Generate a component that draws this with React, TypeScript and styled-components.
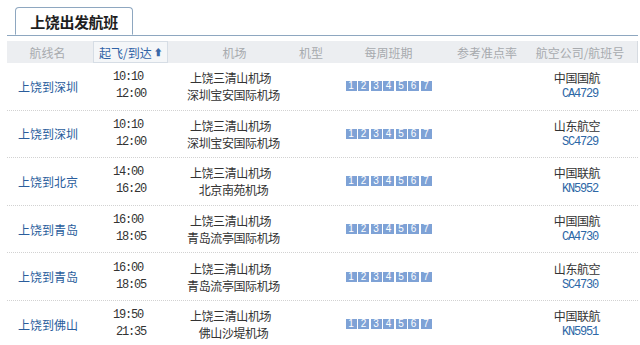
import styled, { createGlobalStyle } from 'styled-components'

const GlobalStyle = createGlobalStyle`
    body {
        margin: 0;
        background: #fff;
        font-family: "Noto Sans CJK SC", "Liberation Sans", sans-serif;
        font-size: 12px;
        color: #333;
    }
`

const COLS = '81px 84px 125px 28px 127px 70px 116px'

const Page = styled.div`
    width: 640px;
    height: 345px;
    overflow: hidden;
    padding: 7px 2px 0 7px;
    box-sizing: border-box;
`
const TabBar = styled.div`
    display: flex;
    border-bottom: 1px solid #8ea7c0;
    height: 28px;
    padding-left: 8px;
`
const Tab = styled.div`
    width: 118px;
    height: 28px;
    box-sizing: border-box;
    border: 1px solid #8ea7c0;
    border-bottom: 1px solid #fff;
    border-radius: 4px 4px 0 0;
    background: #fff;
    display: flex;
    align-items: center;
    justify-content: center;
    font-size: 15px;
    font-weight: 700;
    color: #1e1e1e;
    letter-spacing: -0.4px;
    margin-bottom: -1px;
`
const HeaderRow = styled.div`
    display: grid;
    grid-template-columns: ${COLS};
    height: 22px;
    margin-top: 5px;
    background: #eceef1;
    border-right: 1px solid #d6dbe1;
`
const HeadCell = styled.div<{ $active?: boolean }>`
    display: flex;
    align-items: center;
    justify-content: center;
    color: ${p => (p.$active ? '#2f62a6' : '#a7aaae')};
    font-size: 12px;
    ${p => p.$active && `
        background: #f4f6f8;
        border: 1px solid #d6dde5;
        margin: 0 4px 0 5px;
        justify-content: flex-start;
        padding-left: 5px;
    `}
`
const Arrow = styled.span`
    font-size: 9px;
    margin-left: 2px;
    color: #3a68a8;
`
const Row = styled.div`
    display: grid;
    grid-template-columns: ${COLS};
    height: 47.6px;
    box-sizing: border-box;
    border-bottom: 1px dotted #d2d2d2;
    align-items: center;
`
const RouteName = styled.div`
    color: #2a5d9c;
    padding-left: 11px;
    font-size: 12px;
`
const Stack = styled.div`
    display: flex;
    flex-direction: column;
    line-height: 17px;
`
const Time = styled.span<{ $indent: number }>`
    font-family: "Liberation Mono", monospace;
    font-size: 12px;
    letter-spacing: -1.2px;
    padding-left: ${p => p.$indent}px;
    color: #333;
`
const Airport = styled.span<{ $shift: number }>`
    text-align: center;
    font-size: 12px;
    letter-spacing: -0.4px;
    padding-right: ${p => p.$shift}px;
    color: #333;
`
const Days = styled.div`
    display: flex;
    gap: 1.5px;
    justify-content: center;
`
const Day = styled.span`
    width: 11px;
    height: 10px;
    background: #7ea2d6;
    color: #fff;
    font-family: "Liberation Sans", sans-serif;
    font-size: 10px;
    line-height: 10px;
    text-align: center;
`
const Airline = styled.span`
    text-align: center;
    font-size: 12px;
    letter-spacing: -0.4px;
    padding-right: 6px;
    color: #333;
`
const FlightNo = styled.span`
    text-align: center;
    font-family: "Liberation Mono", monospace;
    font-size: 12px;
    letter-spacing: -1.2px;
    color: #2d67a6;
`

interface Flight {
    route: string
    dep: string
    arr: string
    from: string
    to: string
    airline: string
    no: string
}

const flights: Flight[] = [
    { route: '上饶到深圳', dep: '10:10', arr: '12:00', from: '上饶三清山机场', to: '深圳宝安国际机场', airline: '中国国航', no: 'CA4729' },
    { route: '上饶到深圳', dep: '10:10', arr: '12:00', from: '上饶三清山机场', to: '深圳宝安国际机场', airline: '山东航空', no: 'SC4729' },
    { route: '上饶到北京', dep: '14:00', arr: '16:20', from: '上饶三清山机场', to: '北京南苑机场', airline: '中国联航', no: 'KN5952' },
    { route: '上饶到青岛', dep: '16:00', arr: '18:05', from: '上饶三清山机场', to: '青岛流亭国际机场', airline: '中国国航', no: 'CA4730' },
    { route: '上饶到青岛', dep: '16:00', arr: '18:05', from: '上饶三清山机场', to: '青岛流亭国际机场', airline: '山东航空', no: 'SC4730' },
    { route: '上饶到佛山', dep: '19:50', arr: '21:35', from: '上饶三清山机场', to: '佛山沙堤机场', airline: '中国联航', no: 'KN5951' },
]

const headers = ['航线名', '起飞/到达', '机场', '机型', '每周班期', '参考准点率', '航空公司/航班号']

export default function App() {
    return (
        <Page>
            <GlobalStyle />
            <TabBar>
                <Tab>上饶出发航班</Tab>
            </TabBar>
            <HeaderRow>
                {headers.map((h, i) => (
                    <HeadCell key={h} $active={i === 1}>
                        {h}
                        {i === 1 && <Arrow>⬆</Arrow>}
                    </HeadCell>
                ))}
            </HeaderRow>
            {flights.map((f, i) => (
                <Row key={i}>
                    <RouteName>{f.route}</RouteName>
                    <Stack>
                        <Time $indent={25}>{f.dep}</Time>
                        <Time $indent={28}>{f.arr}</Time>
                    </Stack>
                    <Stack>
                        <Airport $shift={8}>{f.from}</Airport>
                        <Airport $shift={2}>{f.to}</Airport>
                    </Stack>
                    <div />
                    <Days>
                        {[1, 2, 3, 4, 5, 6, 7].map(d => <Day key={d}>{d}</Day>)}
                    </Days>
                    <div />
                    <Stack>
                        <Airline>{f.airline}</Airline>
                        <FlightNo>{f.no}</FlightNo>
                    </Stack>
                </Row>
            ))}
        </Page>
    )
}
